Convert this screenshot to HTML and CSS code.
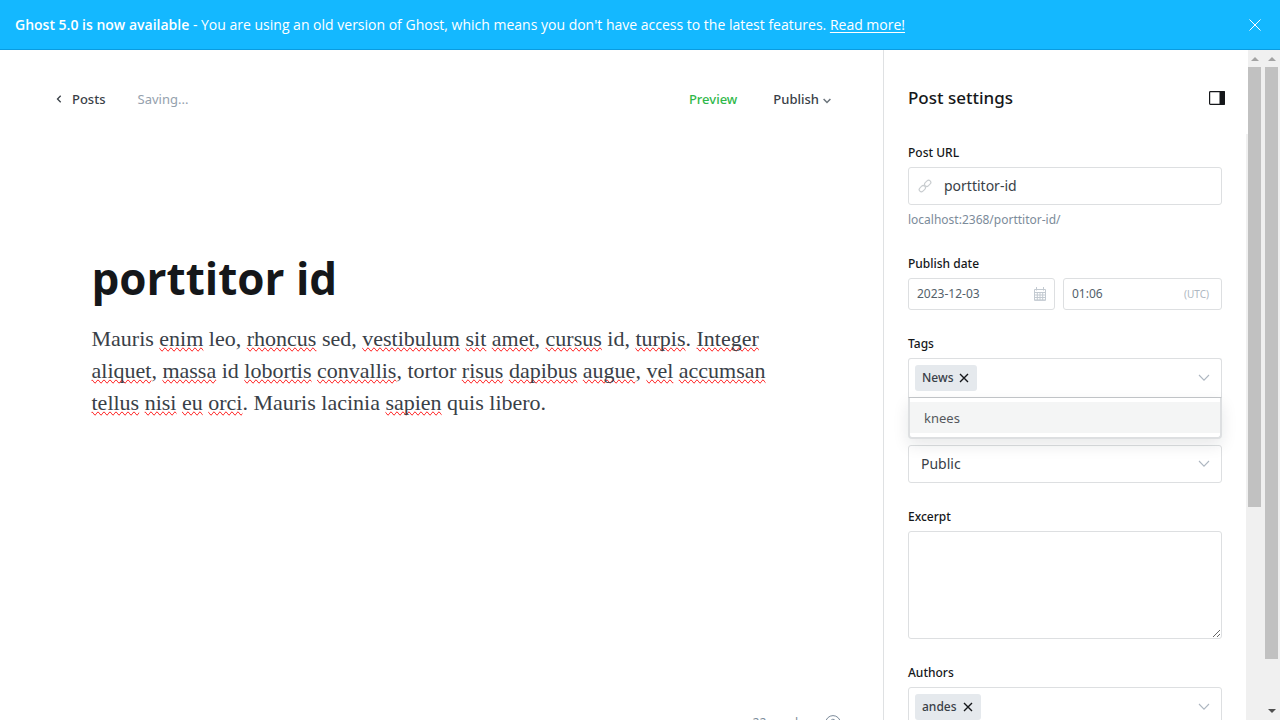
FILE: index.html
```html
<!DOCTYPE html>
<html lang="en">
<head>
<meta charset="utf-8">
<meta name="viewport" content="width=device-width, initial-scale=1">
<title>porttitor id</title>
<link rel="stylesheet" href="styles.css">
</head>
<body>
<aside class="banner">
  <p class="banner-text"><b>Ghost 5.0 is now available</b> - You are using an old version of Ghost, which means you don't have access to the latest features. <a href="#">Read more!</a></p>
  <button class="icon-button banner-close" aria-label="Close"><svg width="14" height="14" viewBox="0 0 14 14"><path d="M1.500 1.500L12.500 12.500M12.500 1.500L1.500 12.500" stroke="#fff" stroke-width="1" fill="none"/></svg></button>
</aside>
<div class="app">
  <main class="editor">
    <header class="editor-header">
      <a class="back" href="#"><svg width="6" height="8" viewBox="0 0 6 8"><path d="M4.700 .8L1.500 4L4.700 7.200" stroke="#394047" stroke-width="1.300" fill="none"/></svg>Posts</a>
      <span class="status">Saving...</span>
      <button class="text-button preview">Preview</button>
      <button class="text-button publish">Publish<svg width="8" height="6" viewBox="0 0 8 6"><path d="M.6 .9L4 4.500L7.400 .9" stroke="#6b747b" stroke-width="1.500" fill="none"/></svg></button>
    </header>
    <article class="post">
      <h1 class="post-title">porttitor id</h1>
      <p class="post-body">Mauris <u>enim</u> leo, <u>rhoncus</u> sed, <u>vestibulum</u> <u>sit</u> <u>amet</u>, <u>cursus</u> id, <u>turpis</u>. <u>Integer</u> <u>aliquet</u>, <u>massa</u> id <u>lobortis</u> <u>convallis</u>, tortor <u>risus</u> <u>dapibus</u> <u>augue</u>, <u>vel</u> <u>accumsan</u> <u>tellus</u> <u>nisi</u> <u>eu</u> <u>orci</u>. Mauris lacinia <u>sapien</u> quis libero.</p>
    </article>
    <footer class="editor-footer"><span>22 words</span><svg width="16" height="16" viewBox="0 0 16 16" fill="none" stroke="#7c8b9a"><circle cx="8" cy="8" r="7.400"/><path d="M5.800 6.500a2.200 2.200 0 1 1 3 2c-.6.3-.8.6-.8 1.300M8 11v1"/></svg></footer>
  </main>
  <aside class="panel">
    <header class="panel-header">
      <h2 class="panel-title">Post settings</h2>
      <button class="icon-button" aria-label="Toggle settings"><svg width="16" height="14" viewBox="0 0 16 14"><rect x=".6" y=".6" width="14.800" height="12.800" rx=".8" fill="#fff" stroke="#15171a" stroke-width="1.200"/><path d="M10.500 0H15a1 1 0 0 1 1 1v12a1 1 0 0 1-1 1h-4.500z" fill="#15171a"/></svg></button>
    </header>
    <form class="panel-form">
      <div class="field">
        <label class="label" for="url">Post URL</label>
        <div class="box">
          <svg class="link-icon" width="14" height="14" viewBox="0 0 14 14" fill="none" stroke="#c8cccf" stroke-width="1.100"><rect x="-3.500" y="-2.200" width="7" height="4.400" rx="2.200" transform="translate(4.300 9.700) rotate(-45)"/><rect x="-3.500" y="-2.200" width="7" height="4.400" rx="2.200" transform="translate(9.700 4.300) rotate(-45)"/></svg>
          <input class="input large" id="url" type="text" value="porttitor-id">
        </div>
        <p class="help">localhost:2368/porttitor-id/</p>
      </div>
      <div class="field">
        <label class="label" for="date">Publish date</label>
        <div class="date-row">
          <div class="box short">
            <input class="input" id="date" type="text" value="2023-12-03">
            <svg width="12" height="14" viewBox="0 0 12 14" fill="none" stroke="#c3cad1"><path d="M.5 2.500h11v10.800H.5zM.5 5.500h11M.5 8h11M.5 10.500h11M3.300 5v8M6 5v8M8.700 5v8"/><path d="M.5 13h11M2.500 0v3.500M9.500 0v3.500"/></svg>
          </div>
          <div class="box short">
            <input class="input" type="text" value="01:06" aria-label="Publish time">
            <small class="zone">(UTC)</small>
          </div>
        </div>
      </div>
      <div class="field tags-field">
        <span class="label" id="tags">Tags</span>
        <div class="box token-box open" role="group" aria-labelledby="tags">
          <span class="token">News<button type="button" class="icon-button" aria-label="Remove News"><svg width="10" height="10" viewBox="0 0 10 10"><path d="M1 1l8 8M9 1L1 9" stroke="#15171a" stroke-width="1.400"/></svg></button></span>
          <svg class="chevron" width="12" height="8" viewBox="0 0 12 8"><path d="M1 1l5 5.200L11 1" stroke="#aeb7c1" stroke-width="1.100" fill="none"/></svg>
          <ul class="menu"><li class="option">knees</li></ul>
        </div>
      </div>
      <div class="field">
        <div class="box">
          <select class="input large select" aria-label="Post access"><option>Public</option></select>
          <svg class="chevron" width="12" height="8" viewBox="0 0 12 8"><path d="M1 1l5 5.200L11 1" stroke="#aeb7c1" stroke-width="1.100" fill="none"/></svg>
        </div>
      </div>
      <div class="field">
        <label class="label" for="excerpt">Excerpt</label>
        <textarea class="textarea" id="excerpt"></textarea>
      </div>
      <div class="field">
        <span class="label" id="authors">Authors</span>
        <div class="box token-box" role="group" aria-labelledby="authors">
          <span class="token">andes<button type="button" class="icon-button" aria-label="Remove andes"><svg width="10" height="10" viewBox="0 0 10 10"><path d="M1 1l8 8M9 1L1 9" stroke="#15171a" stroke-width="1.400"/></svg></button></span>
          <svg class="chevron" width="12" height="8" viewBox="0 0 12 8"><path d="M1 1l5 5.200L11 1" stroke="#aeb7c1" stroke-width="1.100" fill="none"/></svg>
        </div>
      </div>
    </form>
  </aside>
  <div class="scrollbar" aria-hidden="true"><i class="arrow up"></i><i class="thumb inner"></i></div>
  <div class="scrollbar outer-bar" aria-hidden="true"><i class="arrow up"></i><i class="thumb outer"></i><i class="arrow down"></i></div>
</div>
</body>
</html>
```
FILE: styles.css
```css
* { box-sizing: border-box; }
body {
  margin: 0;
  height: 100vh;
  overflow: hidden;
  display: flex;
  flex-direction: column;
  font: 13px/20px "Noto Sans", "Open Sans", sans-serif;
  color: #394047;
  background: #fff;
}
h1, h2, p, ul { margin: 0; padding: 0; }
button, input, select, textarea { font: inherit; color: inherit; }
svg { display: block; flex: none; }

.banner {
  flex: none;
  display: flex;
  align-items: center;
  justify-content: space-between;
  height: 50px;
  padding: 0 18px 0 15px;
  background: #14b8ff;
  border-bottom: 1px solid #0a9ce0;
  color: #fff;
}
.banner-text { font-family: "Open Sans", sans-serif; font-size: 14px; }
.banner-text b { font-weight: 600; }
.banner-text a { color: inherit; text-underline-offset: 2px; }
.icon-button { display: flex; padding: 0; border: 0; background: none; }

.app { flex: 1; min-height: 0; display: flex; }
.editor {
  flex: 1;
  min-width: 0;
  height: calc(100% + 13px);
  display: flex;
  flex-direction: column;
}
.editor-header {
  display: flex;
  align-items: center;
  height: 98px;
  padding: 0 52px 0 56px;
}
.back {
  display: flex;
  align-items: center;
  gap: 10px;
  color: inherit;
  font-weight: 500;
  text-decoration: none;
}
.status { margin-left: 32px; color: #95a1ad; }
.text-button { padding: 0; border: 0; background: none; font-weight: 500; }
.preview { margin-left: auto; color: #30b84a; }
.publish { display: flex; align-items: center; gap: 4px; margin-left: 36px; }
.publish svg { margin-top: 4px; }
.post {
  width: 100%;
  max-width: 792px;
  margin: 0 auto;
  padding: 98px 46px 0 46px;
  flex: 1;
}
.post-title { margin-bottom: 13px; font-family: "Open Sans", sans-serif; font-size: 44px; line-height: 64px; font-weight: 700; color: #15171a; }
.post-body { font: 22px/32px "Liberation Serif", serif; }
.post-body u { text-decoration: spelling-error; }
.editor-footer {
  display: flex;
  align-items: center;
  justify-content: flex-end;
  gap: 21px;
  height: 20px;
  padding-right: 42px;
  font-size: 12px;
  color: #7c8b9a;
}

.panel { flex: none; width: 365px; border-left: 1px solid #dfe1e3; display: flex; flex-direction: column; }
.panel-header {
  flex: none;
  display: flex;
  align-items: center;
  justify-content: space-between;
  height: 84px;
  padding: 12px 23px 0 24px;
}
.panel-title { font-size: 17px; line-height: 24px; font-weight: 500; color: #15171a; }
.panel-form {
  flex: 1;
  min-height: 0;
  overflow: hidden;
  padding: 9px 24px 0;
  border-right: 2px solid #f0f0f0;
}
.field { margin-bottom: 24px; }
.tags-field { margin-bottom: 47px; }
.label { display: block; margin-bottom: 4px; font-size: 12px; font-weight: 500; color: #15171a; }
.box {
  position: relative;
  display: flex;
  align-items: center;
  height: 38px;
  padding: 0 11px 0 9px;
  border: 1px solid #dddfe1;
  border-radius: 3px;
  background: #fff;
}
.input {
  flex: 1;
  min-width: 0;
  width: 100%;
  padding: 0;
  border: 0;
  outline: 0;
  background: none;
  font-size: 12px;
  color: #54616b;
}
.large { font-size: 14px; color: #394047; }
.link-icon { margin-right: 12px; }
.help { margin-top: 4px; font-size: 12px; line-height: 21px; color: #7c8b9a; }
.date-row { display: grid; grid-template-columns: 147fr 159fr; gap: 8px; }
.short { height: 32px; padding: 0 8px; }
.short + .short { padding-right: 12px; }
.zone { font-size: 10px; color: #aeb7c1; }
.token-box { height: 40px; padding-left: 6px; justify-content: space-between; }
.open { border-radius: 3px 3px 0 0; border-bottom-color: #c4c7ca; }
.token {
  display: flex;
  align-items: center;
  gap: 6px;
  height: 26px;
  padding: 0 8px 0 7px;
  border-radius: 3px;
  background: #e5e9ed;
  font-size: 12px;
  font-weight: 500;
}
.menu {
  position: absolute;
  z-index: 1;
  top: 39px;
  left: -1px;
  right: -1px;
  padding: 4px 0;
  border: 2px solid #dddfe1;
  border-top: 0;
  border-radius: 0 0 4px 4px;
  background: #fff;
  box-shadow: 0 6px 16px rgba(20, 30, 40, .1);
  list-style: none;
}
.option { height: 31px; padding-left: 14px; line-height: 32px; background: #f4f5f5; color: #54585c; }
.select { padding-left: 3px; appearance: none; }
.textarea { display: block; width: 100%; height: 108px; border: 1px solid #dddfe1; border-radius: 3px; resize: vertical; outline: 0; }

.scrollbar {
  flex: none;
  display: flex;
  flex-direction: column;
  width: 17px;
  background: #f0f0f0;
}
.outer-bar { width: 15px; }
.arrow {
  align-self: flex-start;
  border: 4px solid transparent;
  border-top-width: 0;
  border-bottom: 4px solid #a3a3a3;
  margin: 7px 0 6px 3px;
}
.down { border-top: 4px solid #505050; border-bottom-width: 0; margin: auto 0 7px 3px; }
.thumb { flex: none; width: 13px; background: #c1c1c1; }
.inner { height: 440px; }
.outer { height: 592px; }
```
